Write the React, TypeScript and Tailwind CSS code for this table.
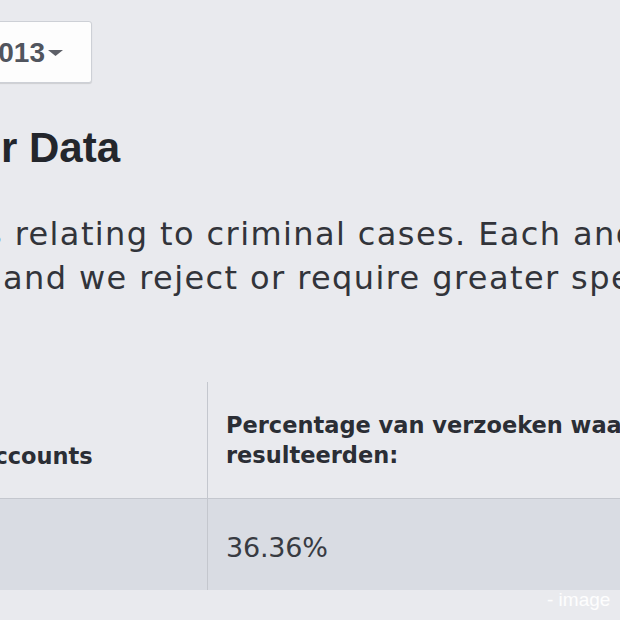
import React from "react";

const sans = { fontFamily: "'DejaVu Sans', Verdana, sans-serif" };

function Caret() {
  return (
    <svg width="15" height="7" viewBox="0 0 15 7" className="shrink-0">
      <polygon points="0,0 15,0 7.5,6" fill="#5d6068" />
    </svg>
  );
}

export default function App() {
  return (
    <main className="relative w-[620px] h-[620px] overflow-hidden bg-[#e9eaee] text-[#32343a]">
      {/* period selector */}
      <div className="pt-[21px]">
        <button className="-ml-[60px] flex h-[62px] w-[152px] items-center justify-end gap-[3px] rounded-[3px] border border-[#cdd0d6] bg-[#fdfdfd] pr-[28px] pt-[2px] shadow-[0_1px_1px_rgba(0,0,0,0.12)] font-['Liberation_Sans',Arial,sans-serif] text-[28px] font-bold text-[#51555e]">
          <span>2013</span>
          <Caret />
        </button>
      </div>

      <h1 className="ml-[1px] mt-[41px] whitespace-nowrap font-['Liberation_Sans',Arial,sans-serif] text-[42px] font-bold leading-[48px] text-[#23262c]">
        r Data
      </h1>

      <div
        className="mt-[40px] text-[32px] leading-[44px] tracking-[1.4px] whitespace-nowrap"
        style={sans}
      >
        <p className="-ml-[15px]">
          s relating to criminal cases. Each and every request we receive
        </p>
        <p className="ml-[3px]">
          and we reject or require greater specificity on requests
        </p>
      </div>

      {/* requests table */}
      <div
        className="mt-[82px] -ml-[93px] grid w-[900px] grid-cols-[301px_1fr]"
        style={sans}
      >
        <div className="flex h-[117px] items-end border-r border-b border-[#c4c7ce] pb-[27px] pl-[70px] text-[22.5px] font-bold leading-[30px] text-[#2b2e35]">
          Accounts
        </div>
        <div className="flex h-[117px] items-end border-b border-[#c4c7ce] pb-[28px] pl-[18px] text-[22.5px] font-bold leading-[30px] text-[#2b2e35] whitespace-nowrap">
          <div>
            Percentage van verzoeken waarbij gegevens
            <br />
            resulteerden:
          </div>
        </div>
        <div className="h-[91px] border-r border-[#c4c7ce] bg-[#d9dce3]" />
        <div className="h-[91px] bg-[#d9dce3] pl-[18px] pt-[33px] text-[27px] leading-[32px] tracking-[-0.2px] text-[#383b42]">
          36.36%
        </div>
      </div>

      <span className="absolute left-[547px] top-[590px] whitespace-nowrap font-['Liberation_Sans',Arial,sans-serif] text-[19px] leading-none text-white/90">
        - image
      </span>
    </main>
  );
}
